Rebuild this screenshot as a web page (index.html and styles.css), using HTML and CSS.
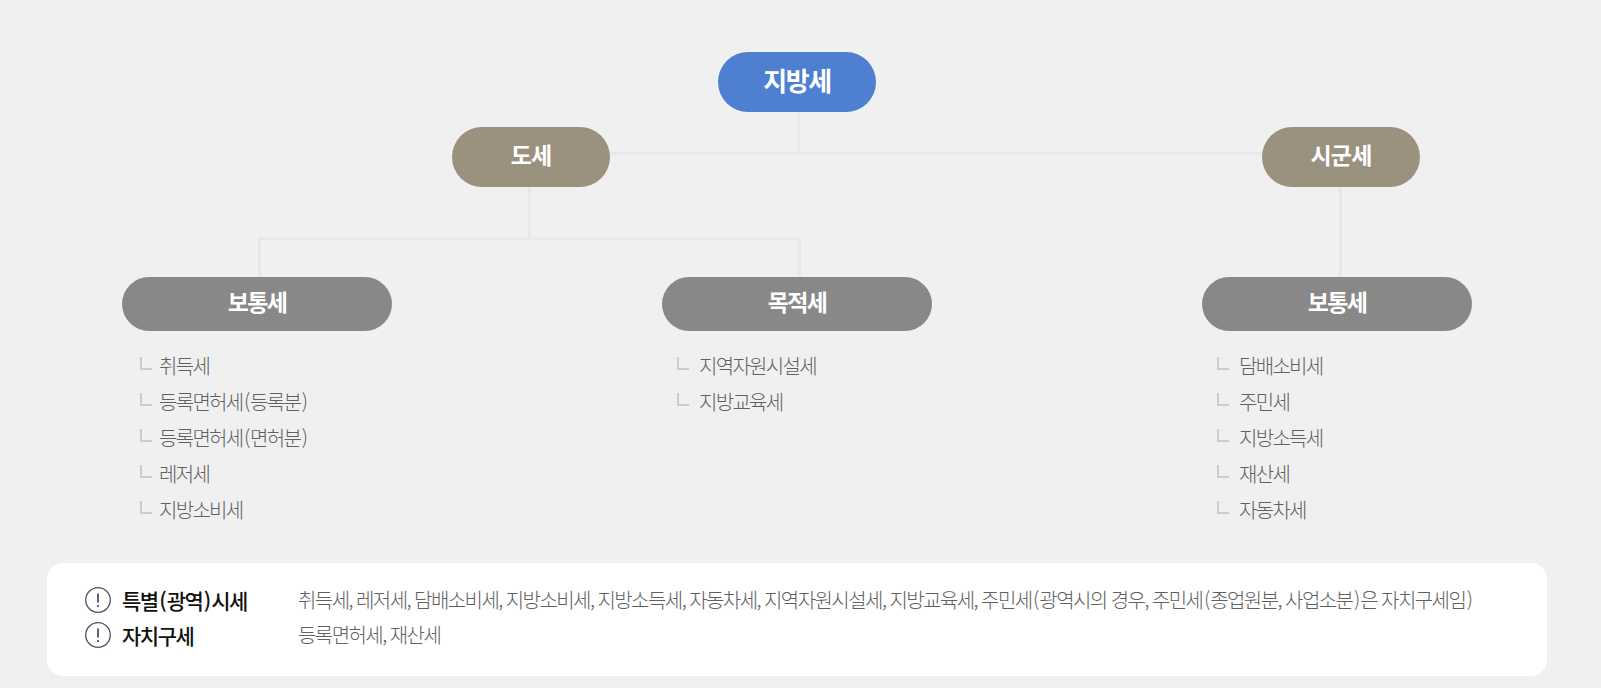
FILE: index.html
```html
<!DOCTYPE html>
<html lang="ko">
<head>
<meta charset="utf-8">
<title>지방세</title>
<link rel="stylesheet" href="styles.css">
</head>
<body>
<main class="page">
  <section class="tree">
    <svg class="links" width="1350" height="280" viewBox="0 0 1350 280" aria-hidden="true">
      <path d="M676.500 112V153.500M488 153.500H1141M407.500 187V238.500M137.500 277V238.500H677.500V277M1218.500 187V277"/>
    </svg>
    <div class="level-root"><div class="pill pill-root">지방세</div></div>
    <div class="level-mid">
      <div class="pill pill-mid">도세</div>
      <div class="pill pill-mid">시군세</div>
    </div>
    <div class="level-leaf">
      <div class="col">
        <div class="pill pill-leaf">보통세</div>
        <ul class="items">
          <li>취득세</li>
          <li>등록면허세<span class="p">(</span>등록분<span class="p">)</span></li>
          <li>등록면허세<span class="p">(</span>면허분<span class="p">)</span></li>
          <li>레저세</li>
          <li>지방소비세</li>
        </ul>
      </div>
      <div class="col col-shift">
        <div class="pill pill-leaf">목적세</div>
        <ul class="items">
          <li>지역자원시설세</li>
          <li>지방교육세</li>
        </ul>
      </div>
      <div class="col col-shift">
        <div class="pill pill-leaf">보통세</div>
        <ul class="items">
          <li>담배소비세</li>
          <li>주민세</li>
          <li>지방소득세</li>
          <li>재산세</li>
          <li>자동차세</li>
        </ul>
      </div>
    </div>
  </section>
  <section class="note">
    <div class="note-row">
      <svg class="alert" width="26" height="26" viewBox="0 0 26 26" aria-hidden="true"><circle cx="13" cy="13" r="12.300"/><path class="alert-mark" d="M13 6.500V15.500M13 18V20"/></svg>
      <strong class="note-title">특별<span class="p">(</span>광역<span class="p">)</span>시세</strong>
      <span class="note-text">취득세, 레저세, 담배소비세, 지방소비세, 지방소득세, 자동차세, 지역자원시설세, 지방교육세, 주민세<span class="p">(</span>광역시의 경우, 주민세<span class="p">(</span>종업원분, 사업소분<span class="p">)</span>은 자치구세임<span class="p">)</span></span>
    </div>
    <div class="note-row">
      <svg class="alert" width="26" height="26" viewBox="0 0 26 26" aria-hidden="true"><circle cx="13" cy="13" r="12.300"/><path class="alert-mark" d="M13 6.500V15.500M13 18V20"/></svg>
      <strong class="note-title">자치구세</strong>
      <span class="note-text">등록면허세, 재산세</span>
    </div>
  </section>
</main>
</body>
</html>
```
FILE: styles.css
```css
* { box-sizing: border-box; }
html, body { margin: 0; padding: 0; }
body {
  background: #f0f0f0;
  font-family: "Noto Sans CJK KR", "Noto Sans", sans-serif;
  width: 1601px;
  height: 688px;
  overflow: hidden;
}
.page { padding: 52px 0 0 47px; }
.tree {
  position: relative;
  width: 1350px;
  margin-left: 75px;
}
.links {
  position: absolute;
  left: 0;
  top: -52px;
  fill: none;
  stroke: #e8e8e8;
  stroke-width: 3;
}
.pill {
  position: relative;
  display: flex;
  align-items: center;
  justify-content: center;
  padding-bottom: 6px;
  color: #fff;
  font-weight: 700;
}
.level-root { display: flex; justify-content: center; }
.pill-root {
  width: 158px;
  height: 60px;
  border-radius: 30px;
  background: #4f7fd0;
  font-size: 26px;
  letter-spacing: -1.500px;
}
.level-mid {
  display: flex;
  justify-content: space-between;
  margin-top: 15px;
  padding: 0 52px 0 330px;
}
.pill-mid {
  width: 158px;
  height: 60px;
  border-radius: 30px;
  background: #9b917f;
  font-size: 23px;
  letter-spacing: -0.800px;
}
.level-leaf {
  display: flex;
  justify-content: space-between;
  margin-top: 90px;
}
.col { width: 270px; }
.pill-leaf {
  height: 54px;
  border-radius: 27px;
  background: #888;
  font-size: 23px;
  letter-spacing: -1.700px;
}
.items {
  list-style: none;
  margin: 17px 0 0;
  padding: 0 0 0 17px;
}
.items li {
  position: relative;
  height: 36px;
  line-height: 36px;
  padding-left: 20px;
  font-size: 20px;
  font-weight: 300;
  letter-spacing: -1.700px;
  color: #606060;
}
.items li::before {
  content: "";
  position: absolute;
  left: 1px;
  top: 9px;
  width: 10px;
  height: 11px;
  border-left: 2px solid #ccc;
  border-bottom: 2px solid #ccc;
}
.col-shift .items li::before { left: -2px; }
.p { margin: 0 1.500px; }
.note {
  width: 1500px;
  height: 113px;
  margin-top: 35px;
  padding: 19px 0 0 38px;
  border-radius: 16px;
  background: #fff;
}
.note-row {
  display: flex;
  align-items: center;
  height: 35px;
}
.alert {
  flex: none;
  fill: none;
  stroke: #4a5068;
  stroke-width: 1.300;
}
.alert-mark { stroke-width: 1.800; }
.note-title {
  width: 176px;
  margin-left: 11px;
  font-size: 21px;
  font-weight: 500;
  letter-spacing: -1.500px;
  color: #111;
}
.note-text {
  font-size: 20px;
  font-weight: 300;
  letter-spacing: -1.560px;
  color: #606060;
  white-space: nowrap;
}
```
